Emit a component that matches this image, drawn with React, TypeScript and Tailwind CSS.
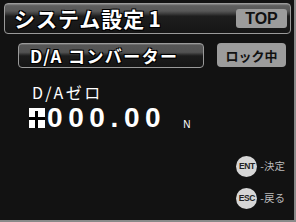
export default function App() {
  const jp = "[font-family:'Noto_Sans_CJK_JP',sans-serif]";
  const lat = "[font-family:'Liberation_Sans','Noto_Sans_CJK_JP',sans-serif]";
  return (
    <div className="w-[296px] h-[222px] bg-[#121212] border-r-2 border-b-2 border-[#8a8a8a] flex flex-col text-white overflow-hidden">
      {/* Title bar */}
      <div className="mt-[3px] ml-[4px] w-[287px] h-[31px] border border-[#9a9a9a] rounded-[4px] bg-[linear-gradient(to_bottom,#8a8a8a_0%,#5e5e5e_6%,#585858_24%,#3a3a3a_34%,#1e1e1e_42%,#151515_100%)] flex items-center justify-between pl-[9px] pr-[3px]">
        <span className={`${jp} text-[21px] font-bold leading-none tracking-[1px] [text-shadow:1px_1px_0_#000,-1px_-1px_0_#000,1px_-1px_0_#000,-1px_1px_0_#000]`}>
          システム設定<span className="ml-[3px]">1</span>
        </span>
        <div className={`${lat} w-[51px] h-[19px] bg-[#9c9c9c] rounded-[3px] flex items-center justify-center text-[16px] font-bold text-[#111] leading-none`}>
          TOP
        </div>
      </div>

      {/* Second row */}
      <div className="mt-[9px] ml-[18px] flex items-start gap-[13px]">
        <div className="w-[186px] h-[25px] border border-[#9a9a9a] rounded-[4px] bg-[linear-gradient(to_bottom,#7a7a7a_0%,#565656_6%,#525252_36%,#353535_44%,#1c1c1c_52%,#151515_100%)] flex items-center pl-[11px]">
          <span className={`${jp} text-[17px] font-bold leading-none tracking-[1.4px] [text-shadow:1px_1px_0_#000,-1px_-1px_0_#000,1px_-1px_0_#000,-1px_1px_0_#000]`}>
            D/A コンバーター
          </span>
        </div>
        <div className={`${jp} w-[69px] h-[24px] bg-[#9c9c9c] rounded-[4px] flex items-center justify-center text-[13px] font-bold text-[#111] leading-none`}>
          ロック中
        </div>
      </div>

      {/* D/A zero label */}
      <div className={`${jp} mt-[16px] ml-[32px] text-[16px] leading-none tracking-[2.6px]`}>
        D/Aゼロ
      </div>

      {/* Value */}
      <div className="mt-[8px] ml-[29px] flex items-end">
        <svg width="16" height="20" viewBox="0 0 16 20">
          <rect x="0" y="0" width="16" height="20" fill="#fff" />
          <rect x="0" y="9" width="16" height="3" fill="#000" />
          <rect x="6" y="3" width="3" height="17" fill="#000" />
        </svg>
        <span className={`${lat} ml-[2px] text-[28px] font-bold leading-[20px] h-[20px] tracking-[5.6px]`}>
          000.00
        </span>
        <span className={`${lat} ml-[17px] mb-[-1px] text-[10px] leading-[8px]`}>N</span>
      </div>

      {/* Buttons */}
      <div className="mt-[28px] mr-[9px] flex flex-col items-end gap-[11px]">
        <div className="flex items-center">
          <div className={`${lat} w-[21px] h-[21px] rounded-full bg-[#d6d6d6] flex items-center justify-center text-[8.5px] font-bold text-[#222] tracking-[-0.5px] leading-none`}>
            ENT
          </div>
          <span className={`${jp} ml-[3px] text-[10.5px] text-[#bdbdbd] leading-none`}>-決定</span>
        </div>
        <div className="flex items-center">
          <div className={`${lat} w-[21px] h-[21px] rounded-full bg-[#d6d6d6] flex items-center justify-center text-[8.5px] font-bold text-[#222] tracking-[-0.5px] leading-none`}>
            ESC
          </div>
          <span className={`${jp} ml-[3px] text-[10.5px] text-[#bdbdbd] leading-none`}>-戻る</span>
        </div>
      </div>
    </div>
  );
}
